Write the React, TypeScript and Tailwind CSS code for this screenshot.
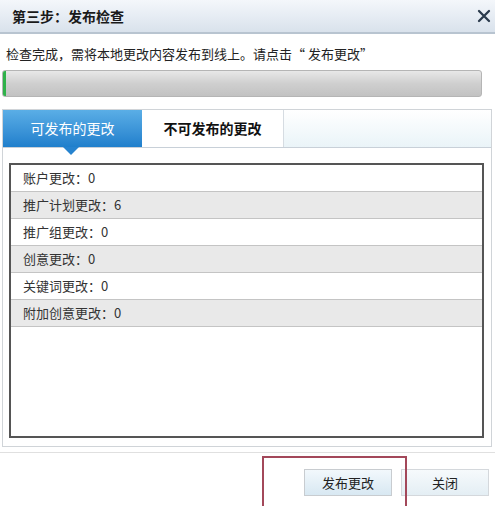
import React from 'react';

const rows = [
  { label: '账户更改', value: 0 },
  { label: '推广计划更改', value: 6 },
  { label: '推广组更改', value: 0 },
  { label: '创意更改', value: 0 },
  { label: '关键词更改', value: 0 },
  { label: '附加创意更改', value: 0 },
];

const font = { fontFamily: '"Noto Sans CJK SC", "Noto Sans", sans-serif' };

export default function App() {
  return (
    <div className="relative w-[495px] h-[506px] bg-white overflow-hidden text-[#222]" style={font}>
      {/* title bar */}
      <div className="flex items-center justify-between h-[34px] pl-[12px] pr-[4px] bg-gradient-to-b from-[#f4f7fb] to-[#d9e2ec] border-b-2 border-[#b8c4d0]">
        <span className="text-[14px] font-bold text-[#1a1a1a]">第三步：发布检查</span>
        <svg width="14" height="14" viewBox="0 0 14 14">
          <path d="M2 2L12 12M12 2L2 12" stroke="#2b3b4d" strokeWidth="2.3" strokeLinecap="round" />
        </svg>
      </div>

      <div className="px-[2px]">
        <div className="pt-[8px] pl-[4px] text-[13px] leading-[24px] text-[#222]">
          检查完成，需将本地更改内容发布到线上。请点击“ 发布更改”
        </div>

        {/* progress */}
        <div className="mt-[4px] w-[480px] h-[27px] rounded-[3px] border border-[#b5b5b5] bg-gradient-to-b from-[#e8e8e8] via-[#cfcfcf] to-[#c2c2c2] overflow-hidden flex">
          <div className="w-[3px] h-full bg-[#2fb24a]" />
        </div>

        {/* tab panel */}
        <div className="mt-[12px] w-[490px] h-[338px] border border-[#d0d4d8] flex flex-col">
          <div className="relative flex h-[38px] border-b border-[#c8d0d8] bg-gradient-to-b from-[#ffffff] to-[#eaf4f8]">
            <div className="relative w-[139px] flex items-center justify-center bg-gradient-to-b from-[#5aaee6] to-[#1f7fcc] text-white text-[14px]">
              可发布的更改
              <span className="absolute left-[60px] -bottom-[8px] w-0 h-0 border-l-[8px] border-r-[8px] border-t-[8px] border-l-transparent border-r-transparent border-t-[#2683cf]" />
            </div>
            <div className="w-[142px] flex items-center justify-center bg-white border-r border-[#d6dce2] text-[14px] font-bold text-[#111]">
              不可发布的更改
            </div>
          </div>

          <div className="flex-1 px-[6px] pt-[15px] pb-[8px]">
            <div className="w-[475px] h-full border-2 border-[#555] bg-white">
              {rows.map((r, i) => (
                <div
                  key={r.label}
                  className={`h-[27px] flex items-center pl-[12px] text-[13px] text-[#333] border-b border-[#c4c4c4] ${i % 2 === 1 ? 'bg-[#e9e9e9]' : 'bg-white'}`}
                >
                  {r.label}：{r.value}
                </div>
              ))}
            </div>
          </div>
        </div>
      </div>

      {/* footer */}
      <div className="mt-[5px] border-t border-[#e0e0e0] flex justify-end gap-[9px] pt-[16px] pr-[6px]">
        <button className="w-[88px] h-[27px] border border-[#c8ccd0] bg-gradient-to-b from-[#f2f8fc] to-[#d8e8f2] text-[13px] text-[#222]">
          发布更改
        </button>
        <button className="w-[88px] h-[27px] border border-[#d4d8dc] bg-gradient-to-b from-[#f6fafc] to-[#e4eef4] text-[13px] text-[#222]">
          关闭
        </button>
      </div>

      {/* annotation highlight */}
      <div className="absolute left-[262px] top-[456px] w-[145px] h-[56px] border-2 border-[#a3485a] pointer-events-none" />
    </div>
  );
}
